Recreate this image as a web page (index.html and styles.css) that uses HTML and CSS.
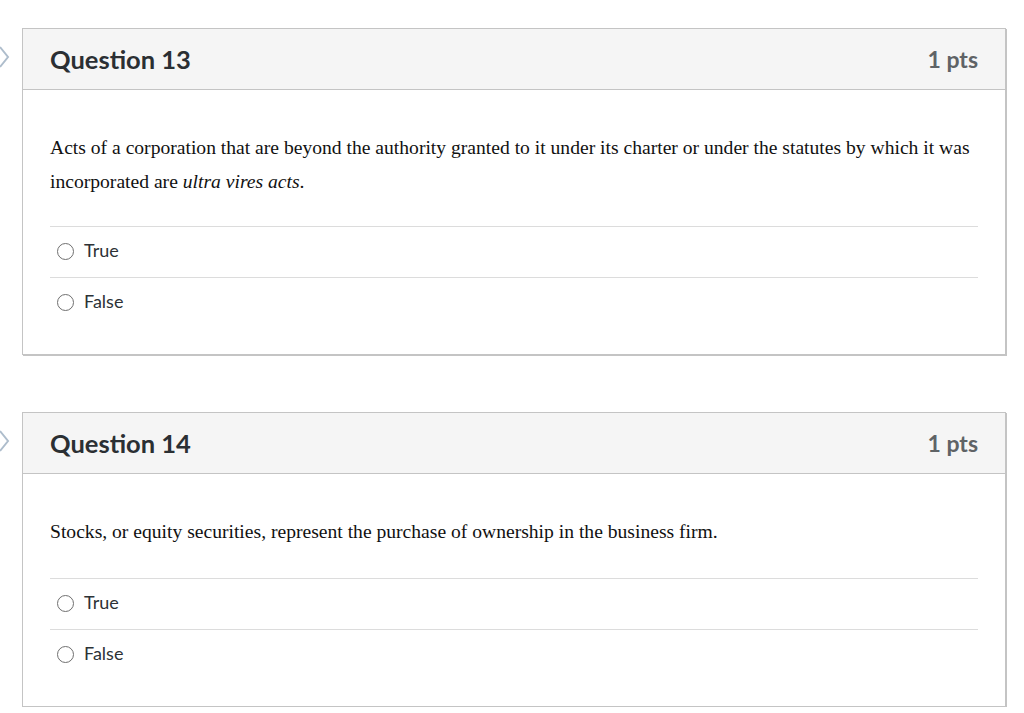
FILE: index.html
```html
<!DOCTYPE html>
<html lang="en">
<head>
<meta charset="utf-8">
<title>Quiz</title>
<link rel="stylesheet" href="styles.css">
</head>
<body>
<div class="quiz">
  <div class="question">
    <svg class="flag" width="12" height="22" viewBox="0 0 12 22"><polyline points="0,1 8,11 0,21" fill="none" stroke="#aebdcc" stroke-width="2" stroke-linejoin="miter"/></svg>
    <div class="header">
      <h2 class="title">Question 13</h2>
      <span class="pts">1 pts</span>
    </div>
    <div class="body">
      <p class="text">Acts of a corporation that are beyond the authority granted to it under its charter or under the statutes by which it was incorporated are <em>ultra vires acts</em>.</p>
      <div class="answers">
        <label class="answer"><span class="radio"></span><span class="label">True</span></label>
        <label class="answer"><span class="radio"></span><span class="label">False</span></label>
      </div>
    </div>
  </div>
  <div class="question">
    <svg class="flag" width="12" height="22" viewBox="0 0 12 22"><polyline points="0,1 8,11 0,21" fill="none" stroke="#aebdcc" stroke-width="2" stroke-linejoin="miter"/></svg>
    <div class="header">
      <h2 class="title">Question 14</h2>
      <span class="pts">1 pts</span>
    </div>
    <div class="body">
      <p class="text text-single">Stocks, or equity securities, represent the purchase of ownership in the business firm.</p>
      <div class="answers">
        <label class="answer"><span class="radio"></span><span class="label">True</span></label>
        <label class="answer"><span class="radio"></span><span class="label">False</span></label>
      </div>
    </div>
  </div>
</div>
</body>
</html>
```

FILE: styles.css
```css
html, body {
  margin: 0;
  padding: 0;
  background: #ffffff;
}
.quiz {
  padding: 28px 18px 0 22px;
  display: flex;
  flex-direction: column;
  gap: 57px;
}
.question {
  position: relative;
  border: 1px solid #c4c4c4;
  box-shadow: 1px 1px 0 #c4c4c4;
  background: #fff;
}
.flag {
  position: absolute;
  left: -23px;
  top: 17px;
}
.header {
  display: flex;
  align-items: center;
  justify-content: space-between;
  height: 60px;
  padding: 0 27px 0 27px;
  background: #f5f5f5;
  border-bottom: 1px solid #c4c4c4;
  font-family: Lato, "Liberation Sans", sans-serif;
}
.title {
  margin: 0;
  font-size: 25.5px;
  font-weight: 700;
  color: #2b2f33;
}
.pts {
  font-size: 23px;
  font-weight: 700;
  color: #5f6366;
}
.body {
  padding: 41px 27px 26px 27px;
}
.text {
  margin: 0 0 27px 0;
  font-family: "Liberation Serif", "Times New Roman", serif;
  font-size: 19.6px;
  line-height: 34px;
  color: #111;
}
.text-single {
  margin-bottom: 29px;
}
.answers {
  display: flex;
  flex-direction: column;
}
.answer {
  display: flex;
  align-items: center;
  gap: 10px;
  height: 45px;
  padding: 0 0 5px 7px;
  border-top: 1px solid #dcdcdc;
  font-family: Lato, "Liberation Sans", sans-serif;
  font-size: 18px;
  color: #2d3236;
}
.radio {
  width: 17px;
  height: 17px;
  margin-top: 4px;
  border: 1px solid #6f6f6f;
  border-radius: 50%;
  box-sizing: border-box;
  background: #fff;
}
```
